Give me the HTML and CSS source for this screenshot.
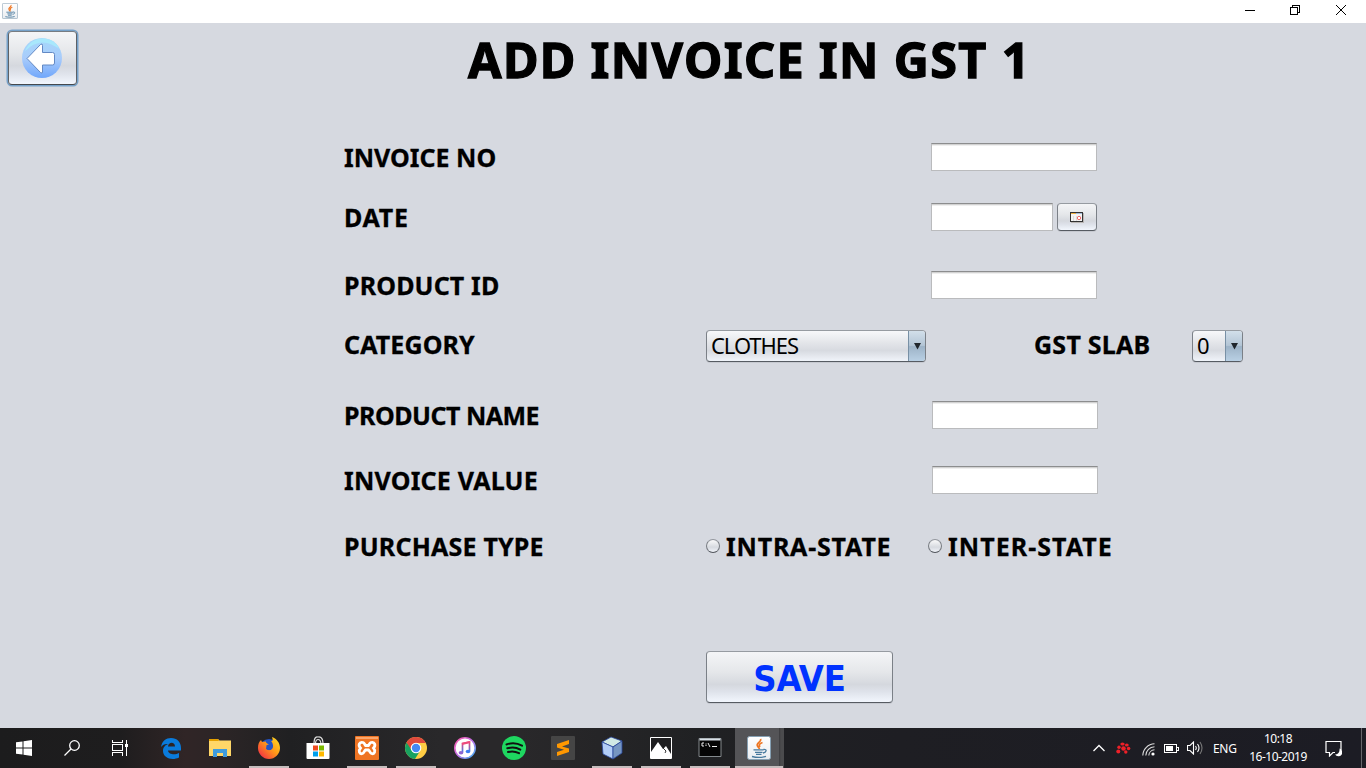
FILE: index.html
```html
<!DOCTYPE html>
<html lang="en">
<head>
<meta charset="utf-8">
<title>Add Invoice</title>
<link rel="stylesheet" href="styles.css">
</head>
<body>
<svg width="0" height="0" class="defs">
  <defs>
    <linearGradient id="paper" x2="0" y2="1"><stop stop-color="#fff"/><stop offset="1" stop-color="#e8ecf0"/></linearGradient>
    <linearGradient id="orb" x2="0" y2="1"><stop stop-color="#a5d8fa"/><stop offset=".5" stop-color="#a9ccfb"/><stop offset="1" stop-color="#71a7fb"/></linearGradient>
    <linearGradient id="fox" x1="1" x2="0" y2="1"><stop stop-color="#ffe226"/><stop offset=".45" stop-color="#ff9a18"/><stop offset="1" stop-color="#f0184e"/></linearGradient>
    <linearGradient id="ring" x2="1" y2="1"><stop stop-color="#ff5aa8"/><stop offset=".5" stop-color="#c070e8"/><stop offset="1" stop-color="#35b7f5"/></linearGradient>
    <linearGradient id="note" x2="0" y2="1"><stop stop-color="#f24874"/><stop offset="1" stop-color="#3d7ef0"/></linearGradient>
    <symbol id="java" viewBox="0 0 24 24">
      <rect x=".5" y=".5" width="23" height="23" rx="2" fill="url(#paper)" stroke="#86a0b3"/>
      <path d="M13.500 3c1.500 3-5 4-3 7 .5 1 1.500 1.500 2 3M15.500 6.500c-3 1-4 2.500-2.500 4.500" fill="none" stroke="#ee7623" stroke-width="1.700"/>
      <path d="M6.500 13.800h10M8 16.300h7.500M9 18.300h5.500M16.500 13.500c4-.5 3 3-.5 3.500M5 20.500c4 1 10 1 14-.2" fill="none" stroke="#47799d" stroke-width="1.300"/>
    </symbol>
  </defs>
</svg>
<div class="screen">
  <header class="titlebar">
    <svg class="app-icon" width="16" height="16"><use href="#java"/></svg>
    <div class="window-controls">
      <svg width="12" height="12" shape-rendering="crispEdges"><path d="M2 6.500h10" stroke="#000"/></svg>
      <svg width="12" height="12" shape-rendering="crispEdges" fill="none" stroke="#000"><path d="M1.500 3.500h7v7h-7zM3.500 3V1.500h7v7H9"/></svg>
      <svg width="12" height="12" fill="none" stroke="#000"><path d="M1 1l10 10M11 1L1 11"/></svg>
    </div>
  </header>

  <main class="window">
    <div class="heading">
      <button class="nimbus back" aria-label="Back">
        <svg width="42" height="42" viewBox="0 0 42 42">
          <circle cx="21" cy="21" r="20" fill="url(#orb)"/>
          <path d="M4 14C8 4 18-1 28 2.500c6 2 9 6 10 9-6-3-13-8-22-5C10 8 7 12 4 14z" fill="#a8e8fc"/>
          <path d="M6 21.500L19.500 7.500q2-1.500 2 1v7h10q2 0 2 2v8.500q0 2-2 2h-10v7q0 2-2 .5z" fill="#fff" stroke="#6389c4"/>
        </svg>
      </button>
      <h1>ADD INVOICE IN GST 1</h1>
    </div>

    <form class="form">
      <div class="row r-no"><span class="label l-no">INVOICE NO</span><input class="field"></div>
      <div class="row r-date"><span class="label l-date">DATE</span><input class="field short">
        <button type="button" class="nimbus pick" aria-label="Pick date"><svg width="14" height="11" shape-rendering="crispEdges">
          <path d="M1 10.500h13M13.500 1v10" stroke="#b9b6b4"/><rect x=".5" y=".5" width="12" height="9" fill="#f4f4f4" stroke="#333"/>
          <path d="M1 1.500h5" stroke="#eeb044"/><path d="M6 1.500h6" stroke="#a3bcda"/><path d="M3.500 4v5M6.500 4v5" stroke="#ddd"/>
          <circle cx="9" cy="6" r="1.700" fill="#fff" stroke="#f16a6a" shape-rendering="auto"/></svg></button>
      </div>
      <div class="row r-id"><span class="label l-id">PRODUCT ID</span><input class="field"></div>
      <div class="row r-cat"><span class="label l-cat">CATEGORY</span>
        <div class="combo wide"><span class="value">CLOTHES</span><i class="drop"><svg width="7" height="7"><path d="M0 0h7L3.500 6.500z" fill="#20262c"/></svg></i></div>
        <span class="label l-slab">GST SLAB</span>
        <div class="combo small"><span class="value">0</span><i class="drop"><svg width="7" height="7"><path d="M0 0h7L3.500 6.500z" fill="#20262c"/></svg></i></div>
      </div>
      <div class="row r-name"><span class="label l-name">PRODUCT NAME</span><input class="field shifted"></div>
      <div class="row r-value"><span class="label l-value">INVOICE VALUE</span><input class="field shifted"></div>
      <div class="row r-type"><span class="label l-type">PURCHASE TYPE</span>
        <label class="option"><i class="radio"></i><span class="label l-intra">INTRA-STATE</span></label>
        <label class="option"><i class="radio"></i><span class="label l-inter">INTER-STATE</span></label>
      </div>
      <button type="button" class="nimbus save">SAVE</button>
    </form>
  </main>

  <footer class="taskbar">
    <nav class="system">
      <span class="slot"><svg width="16" height="16" fill="#fff"><path d="M0 2.300L6.500 1.400V7.500H0zM7.500 1.200L16 0v7.500H7.500zM0 8.500h6.500v6.100L0 13.700zM7.500 8.500H16V16l-8.500-1.200z"/></svg></span>
      <span class="slot"><svg width="16" height="16" fill="none" stroke="#fff" stroke-width="1.300"><circle cx="10.500" cy="5.500" r="4.800"/><path d="M7 9L.5 15.500"/></svg></span>
      <span class="slot"><svg width="17" height="16" fill="none" stroke="#fff" shape-rendering="crispEdges"><path d="M.5 0v2.500h10V0M.5 4.500h10v6H.5zM.5 16v-3.500h10V16M14.500 0v16"/><path d="M13 4h3v3h-3z" fill="#fff" stroke="none"/></svg></span>
    </nav>
    <nav class="apps">
      <span class="slot"><svg width="22" height="22"><path d="M1 10C2 4 6 1 11 1c6 0 10 4 10 10v2.500H8c.5 4 7 5 11 2.500v4.500C12 24 3 21 3 14c0-4 2.500-6 5-7C5 6.500 3 7.500 1 10zM8 9.500h7c0-5-6.500-5-7 0z" fill="#0a7bdc" fill-rule="evenodd"/></svg></span>
      <span class="slot"><svg width="22" height="20"><path d="M0 1h9l1.500 1.500H22V18H0z" fill="#ffd768"/><path d="M0 1h9l1 2H0z" fill="#e5a100"/><path d="M4 19v-8h14v8h-4v-4H8v4z" fill="#3f9cdd"/></svg></span>
      <span class="slot open"><svg width="24" height="24"><circle cx="12" cy="12.500" r="9.500" fill="#2454c5"/><path d="M1 12c0-4 1-6 3-8l1 2 4-.5c-.5 1 1 2 3 3-2 0-3.500 1-2.500 2.500-2 2.500 3 4.500 5.500 2 2-2 1-6-1-8 2 .5 2-1 1-4 5 2 8 6 8 11 0 6-5 11-11 11S1 18 1 12z" fill="url(#fox)"/></svg></span>
      <span class="slot"><svg width="24" height="24"><path d="M8 8c0-8 3-7 4-7s5-1 5 7M9.500 8c0-6 5-6 5.500 0" fill="none" stroke="#ddd" stroke-width="1.200"/><path d="M.5 7H23.500v15q0 1-1 1h-21q-1 0-1-1z" fill="#fff"/><path d="M7 9.500h5v5H7z" fill="#ee4b20"/><path d="M13 9.500h5v5h-5z" fill="#7bb900"/><path d="M7 15.500h5v5H7z" fill="#009fec"/><path d="M13 15.500h5v5h-5z" fill="#ffb800"/></svg></span>
      <span class="slot open"><svg width="24" height="24"><rect width="24" height="24" rx="1" fill="#ef7423"/><path d="M1 1h22v2H1z" fill="#f8a66d"/><path d="M8 6.500c-4-1-5 3-2.500 5.500-2.500 3-1 6.500 2 5.500 1.500-.5 1.500-2.500 3-3.500h3c1.500 1 1.500 3 3 3.500 3 1 4.500-2.500 2-5.500 2.500-2.500 1.500-6.500-2.500-5.500-1.500.5-1.500 2-2.500 3h-3c-1-1-1-2.500-2.500-3z" fill="none" stroke="#fff" stroke-width="2.800"/></svg></span>
      <span class="slot open"><svg width="24" height="24"><circle cx="12" cy="12" r="11" fill="#ffcd43"/><path d="M12 12L2.500 6.500A11 11 0 0 0 11 23l5-8z" fill="#18a260"/><path d="M12 7h9.800A11 11 0 0 0 2.500 6.500L7.500 14l2-6z" fill="#df4a3d"/><circle cx="12" cy="12" r="5.300" fill="#fff"/><circle cx="12" cy="12" r="4.200" fill="#4489f4"/></svg></span>
      <span class="slot"><svg width="24" height="24"><circle cx="12" cy="12" r="10.200" fill="#fff" stroke="url(#ring)" stroke-width="1.600"/><path d="M9.500 16.500V7.500l7-1.500v9" fill="none" stroke="url(#note)" stroke-width="1.700"/><path d="M9 8l8-2" stroke="#ee4b7c" stroke-width="2"/><ellipse cx="8" cy="16.700" rx="2.300" ry="1.700" fill="#8e65d0"/><ellipse cx="15" cy="15.500" rx="2.300" ry="1.700" fill="#3d7ef0"/></svg></span>
      <span class="slot"><svg width="24" height="24"><circle cx="12" cy="12" r="12" fill="#1ed760"/><path d="M4.500 8.500c5-1.800 11-1.300 15.500 1.200M5.300 12.300c4.500-1.400 9-1 13 1.300M6 16c4-1.100 7.500-.7 11 1.200" fill="none" stroke="#111" stroke-width="2" stroke-linecap="round"/></svg></span>
      <span class="slot"><svg width="24" height="24"><rect width="24" height="24" rx="1" fill="#454545"/><path d="M6 8l12-4v4l-7 2.500 7 2v3.500L6 20v-4l7-2.300L6 11.500z" fill="#ff9800"/></svg></span>
      <span class="slot open"><svg width="24" height="24" stroke="#29479d" stroke-width=".8"><path d="M2 6l9-5 11 4-9 6z" fill="#d1e9e5"/><path d="M2 6l11 5v12L3 18z" fill="#b2cdf7"/><path d="M13 11l9-6v12l-9 6z" fill="#7696c2"/></svg></span>
      <span class="slot open"><svg width="24" height="24"><path d="M1.500 1.500h21v21h-21z" fill="#1e1e20" stroke="#fff"/><path d="M2 16l7-10 5 7 3-3 5 8v4H2z" fill="#fff"/><path d="M14 12l3 3-1 2" stroke="#333" fill="none"/></svg></span>
      <span class="slot open"><svg width="24" height="20"><path d="M1 .5h22v18H1z" fill="#050505" stroke="#83898c"/><path d="M1.500 1.500h21" stroke="#d7dfe6" stroke-width="2"/><path d="M6 5H4v3h2M8 5.500v1M8 7v1M10 5l2 4M14 8.500h5" fill="none" stroke="#eee"/></svg></span>
      <span class="slot active"><svg width="24" height="24"><use href="#java"/></svg></span>
    </nav>
    <div class="tray">
      <svg width="12" height="8" fill="none" stroke="#fff" stroke-width="1.300"><path d="M.5 7L6 1.500 11.500 7"/></svg>
      <svg class="paw" width="15" height="12" fill="#ee2028"><ellipse cx="6.500" cy="2" rx="2.200" ry="1.600"/><ellipse cx="10.800" cy="3" rx="1.900" ry="1.500"/><circle cx="3" cy="5.300" r="1.700"/><circle cx="7.500" cy="6.500" r="2.300"/><circle cx="12.600" cy="6.500" r="1.800"/><circle cx="2.300" cy="9.500" r="2"/><circle cx="9.800" cy="10" r="1.700"/></svg>
      <svg class="wifi" width="13" height="13" fill="none" stroke="#ddd" stroke-width="1.100"><path d="M.8 12.500A12 12 0 0 1 12.500.8M3.800 12.500a9 9 0 0 1 8.700-8.700M6.800 12.500a6 6 0 0 1 5.700-5.700"/><circle cx="11" cy="11" r="1.600" fill="#fff" stroke="none"/></svg>
      <svg class="battery" width="15" height="9" shape-rendering="crispEdges"><path d="M.5.5h12v8H.5zM13 3h1.500v3H13" fill="none" stroke="#fff"/><path d="M2 2h7v5H2z" fill="#fff"/></svg>
      <svg class="volume" width="17" height="14" fill="none" stroke="#fff" stroke-width="1.100"><path d="M.5 4.500H3L6.500 1v12L3 9.500H.5zM8.500 5q1.500 2 0 4M10.500 3q3 4 0 8"/><path d="M13 1q4 6 0 12" stroke="#777"/></svg>
      <span class="lang">ENG</span>
      <span class="clock"><span>10:18</span><span>16-10-2019</span></span>
      <svg class="action" width="17" height="17" fill="none" stroke="#fff" stroke-width="1.200"><path d="M16 10V1.500H1v11h3.500V16L8 12.500h2"/><path d="M14.500 8.500a4 4 0 1 1-4.500 6c3 .5 5-2.500 4.500-6z" fill="#fff" stroke="none"/></svg>
      <i class="peek"></i>
    </div>
  </footer>
</div>
</body>
</html>
```
FILE: styles.css
```css
* { box-sizing: border-box; }
body { margin: 0; overflow: hidden; font-family: "Noto Sans", "Open Sans", sans-serif; color: #000; }
svg { display: block; flex: none; }
.defs { position: absolute; }
.screen { width: 1366px; height: 768px; display: flex; flex-direction: column; background: #d6d9e0; }

.titlebar { height: 23px; background: #fff; display: flex; justify-content: space-between; padding: 3px 19px 0 2px; }
.window-controls { display: flex; gap: 34px; padding-top: 1px; }
.window { height: 705px; }

.nimbus {
  padding: 0; border: 1px solid; border-color: #969ba1 #7b8087 #565b62; border-radius: 4px;
  background: linear-gradient(#f4f5f7, #e5e7ea 40%, #d5d8de 65%, #dfe3eb 80%, #f2f6fd);
  box-shadow: 0 1px 0 #c6c9d0; display: flex; align-items: center; justify-content: center;
}
.heading { display: flex; height: 77px; padding: 8px 0 0 8px; }
.back { width: 69px; height: 54px; padding-right: 2px; border-color: #777c82 #5d6167 #45494e; box-shadow: 0 0 0 1.5px #75a1c9; }
h1 { margin: -1px 0 0 391px; font-size: 48.500px; line-height: 58px; letter-spacing: 1.35px; white-space: nowrap; -webkit-text-stroke: 1.3px #000; }

.form { padding-left: 344px; }
.row { display: flex; align-items: center; height: 30px; }
.r-no { margin-top: 42px; }
.r-date { margin-top: 30px; }
.r-id { margin-top: 38px; }
.r-cat { margin-top: 30px; height: 32px; margin-bottom: 38px; }
.r-value { margin-top: 35px; }
.r-type { margin-top: 36px; }
.label { width: 362px; font-size: 25px; font-weight: 700; line-height: 30px; white-space: nowrap; margin-top: -1px; -webkit-text-stroke: .3px #000; }
.l-date { letter-spacing: .7px; }
.l-id { letter-spacing: .15px; }
.l-cat { letter-spacing: .1px; }
.l-name { letter-spacing: -.5px; }
.l-value, .l-type { letter-spacing: .2px; }
.l-intra { letter-spacing: .8px; }
.l-inter { letter-spacing: 1.05px; }
.r-cat .label { margin-top: -4px; }
.field { width: 166px; height: 28px; margin: 0 0 0 225px; border: 1px solid #babbbd; border-top: 1px solid #8c8d8e; border-radius: 0; background: #fff; box-shadow: inset 0 1px #d2d2d2, inset 0 2px #efefef; }
.short { width: 122px; }
.shifted { margin-left: 226px; }
.pick { width: 40px; height: 28px; margin-left: 4px; }

.combo { display: flex; height: 32px; border: 1px solid; border-color: #969ba1 #7b8087 #565b62; border-radius: 4px; background: linear-gradient(#f7f8fa, #e3e5e9 40%, #d7dae0 65%, #f0f4fa); box-shadow: 0 1px 0 #c6c9d0; overflow: hidden; }
.wide { width: 220px; }
.small { width: 51px; }
.value { flex: 1; padding-left: 4px; font-size: 22px; line-height: 29px; letter-spacing: -1.050px; }
.drop { width: 17px; border-left: 1px solid #7890a5; display: flex; align-items: center; justify-content: center; background: linear-gradient(#d2dfea, #b3c5d5 48%, #9db3c7 52%, #b9d0e4); }
.l-slab { width: 158px; margin-left: 108px; letter-spacing: .25px; }

.option { display: flex; align-items: center; width: 222px; }
.radio { width: 14px; height: 14px; margin: 0 6px 0 0; border: 1px solid; border-color: #92969c #777b80 #50545a; border-radius: 50%; background: linear-gradient(#fafafa, #d6d9df 60%, #f1f4fa); }
.option .label { width: auto; }
.save { width: 187px; height: 52px; margin: 90px 0 0 362px; font: 700 36px "DejaVu Sans Condensed", "DejaVu Sans", sans-serif; font-stretch: condensed; letter-spacing: -.2px; color: #0032ff; padding-top: 2px; }

.taskbar { height: 40px; display: flex; background: linear-gradient(90deg, #1c1c1d 0, #1e1d1e 120px, #302526 185px, #2b2526 225px, #202022 290px, #29282a 440px, #29282a 520px, #202123 700px, #1e1e23 900px, #1c1c24); color: #fff; }
.system, .apps { display: flex; }
.slot { display: flex; align-items: center; justify-content: center; height: 40px; }
.system .slot { width: 48px; }
.apps { padding-left: 3px; }
.apps .slot { width: 49px; padding-right: 2px; }
.open { background: linear-gradient(#c5bdbd, #c5bdbd) 4px 38px / 40px 2px no-repeat; }
.active { background: linear-gradient(#c5bdbd, #c5bdbd) 0 38px / 48px 2px no-repeat, linear-gradient(90deg, #545457 44px, #3b3b3e 44px, #4b4b4d 46px); }
.tray { flex: 1; display: flex; align-items: center; font-size: 12px; padding-left: 309px; }
.paw { margin-left: 11px; }
.wifi { margin-left: 11px; margin-top: 3px; }
.battery { margin-left: 9px; }
.volume { margin-left: 8px; }
.lang { margin-left: 9px; width: 36px; letter-spacing: -.3px; }
.clock { display: flex; flex-direction: column; align-items: center; width: 58px; line-height: 18px; letter-spacing: -.5px; white-space: nowrap; }
.action { margin-left: 18px; }
.peek { width: 1px; height: 40px; margin-left: 19px; background: #66666b; }
```
